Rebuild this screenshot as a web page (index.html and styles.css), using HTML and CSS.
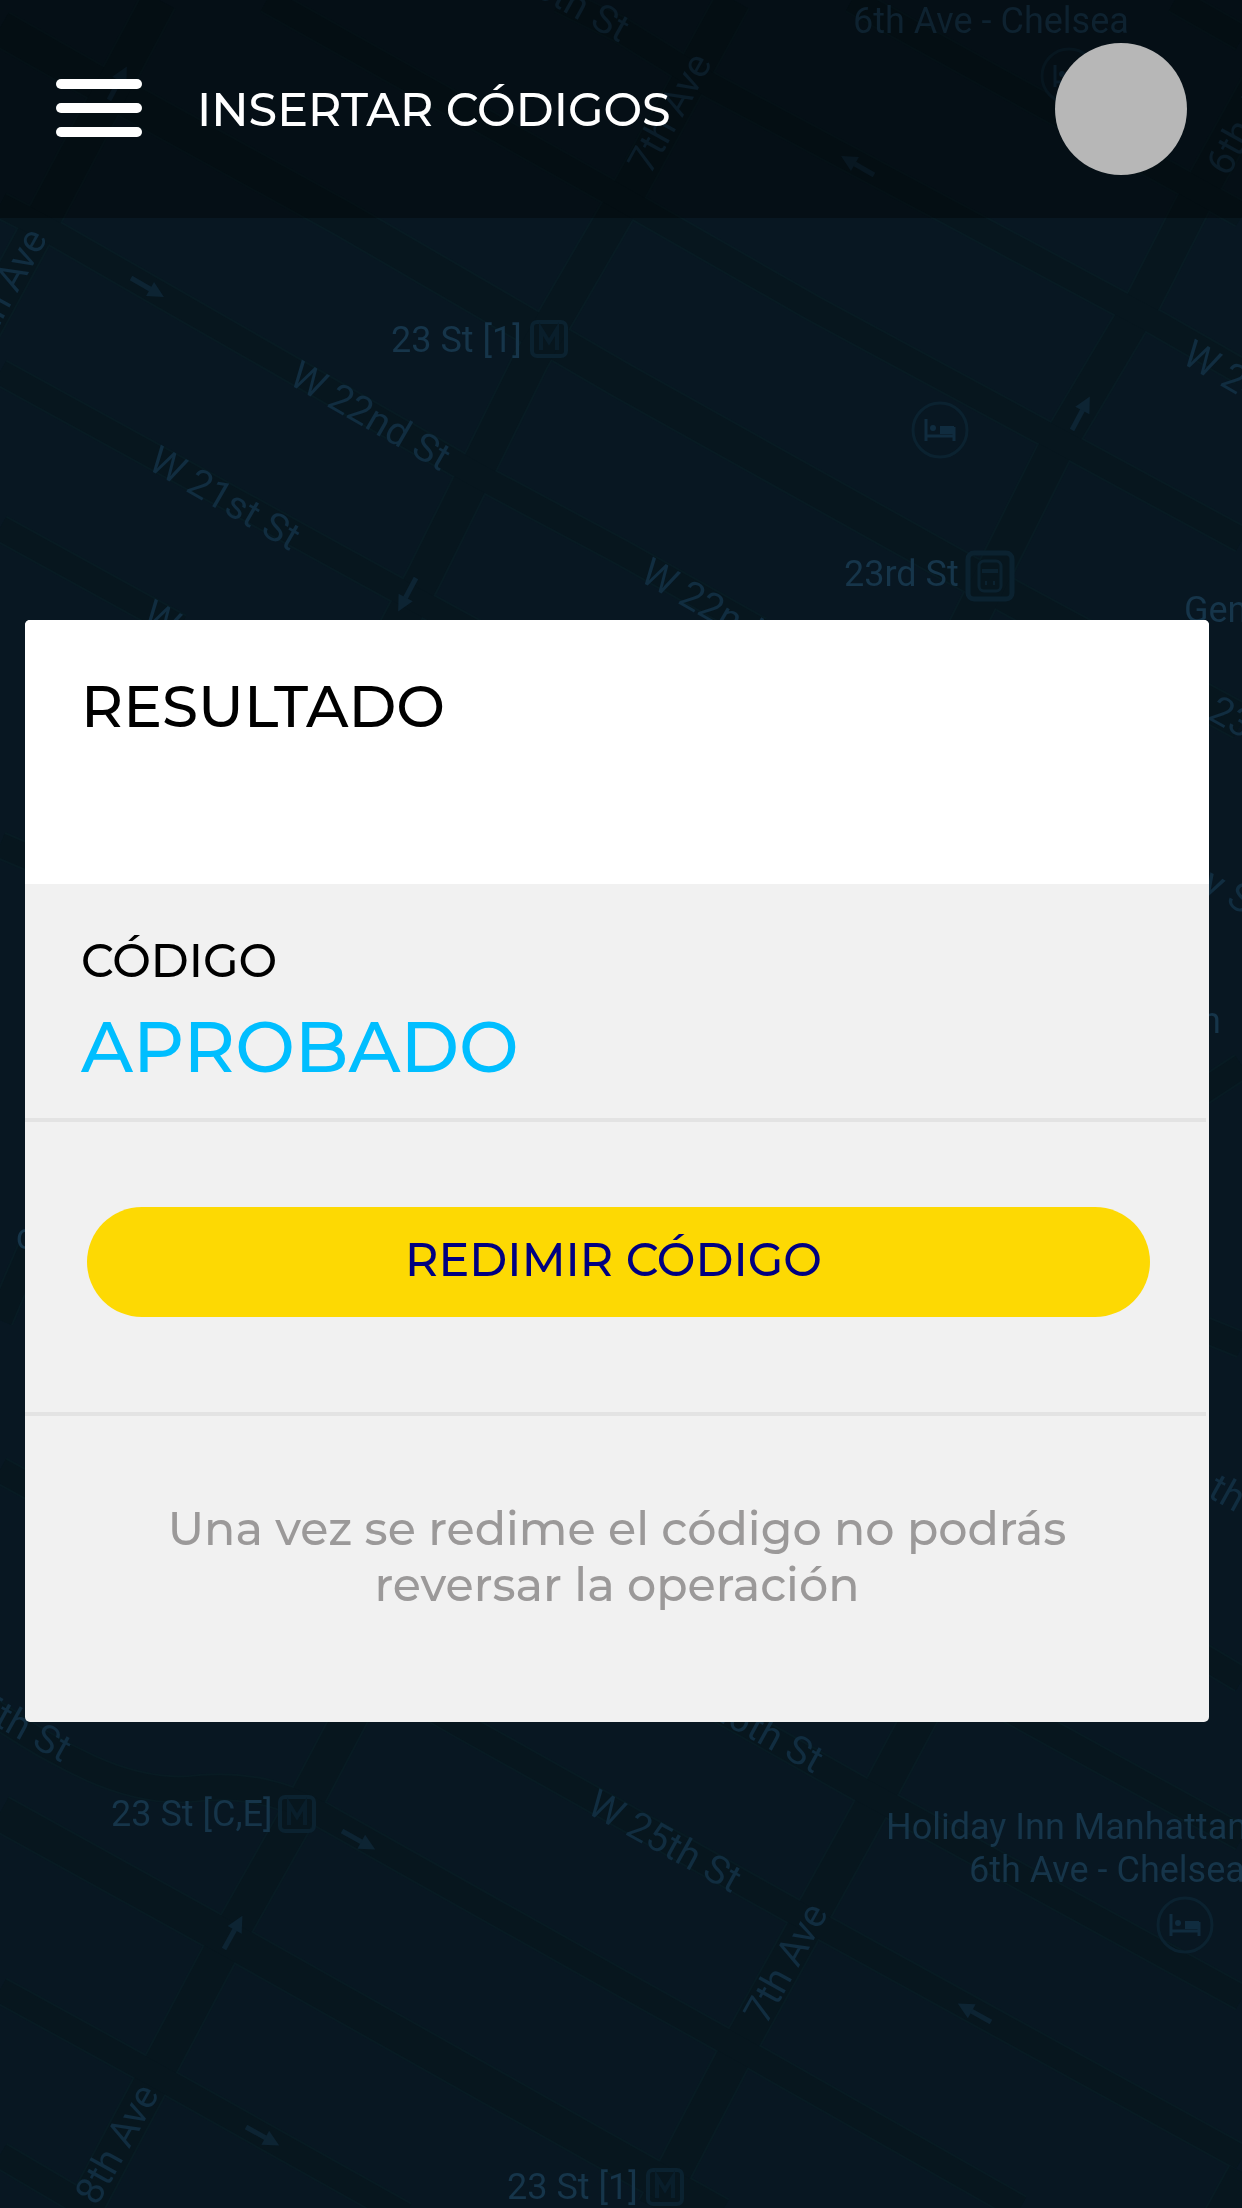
FILE: index.html
```html
<!DOCTYPE html>
<html lang="es">
<head>
<meta charset="utf-8">
<meta name="viewport" content="width=device-width, initial-scale=1">
<title>Insertar códigos</title>
<link rel="stylesheet" href="styles.css">
</head>
<body>
<svg class="map" viewBox="0 0 1242 2208" preserveAspectRatio="xMidYMid slice" aria-hidden="true">
  <defs>
    <g id="wide">
      <path d="M0 28L118 95L342 218L621 380L1010 597L1242 722"/>
      <path d="M159 0L44 217L-20 335"/>
      <path d="M733 0L624 200L531 360L424 577L380 660"/>
      <path d="M1305 0L1195 200L1144 300L1055 450L960 640"/>
      <path d="M380 1660L309 1795L220 1953L85 2208"/>
      <path d="M950 1660L877 1797L739 2047L655 2208"/>
      <path d="M1245 2174L1220 2220"/>
      <path d="M0 1813L230 1940L600 2148L720 2215"/>
    </g>
    <g id="narrow">
      <path d="M267 0L608 191L811 307L1065 444L1242 540"/>
      <path d="M560 0L621 30L710 85L960 218L1160 325L1242 372"/>
      <path d="M852 0L1179 180L1242 215"/>
      <path d="M1175 0L1242 38"/>
      <path d="M0 205L45 228L188 310L473 473L621 552L760 630"/>
      <path d="M0 372L392 587L480 635"/>
      <path d="M0 528L180 627"/>
      <path d="M0 1990L155 2075L405 2215"/>
      <path d="M0 2155L90 2208"/>
      <path d="M-10 1710Q40 1745 90 1768Q150 1795 200 1788Q270 1782 329 1819L621 1983L738 2048L1020 2208"/>
      <path d="M400 1690L457 1723L791 1910L1242 2158"/>
      <path d="M720 1710L862 1790L1242 1998"/>
      <path d="M1000 1705L1242 1838"/>
      <path d="M1190 1100L1242 1066M1205 1330L1242 1345M1200 1655L1242 1680"/>
      <path d="M0 845L40 862M0 1470L40 1492M0 1320L30 1250"/>
    </g>
    <g id="arrow">
      <path d="M0 0H28" fill="none" stroke="#0d2433" stroke-width="5"/>
      <path d="M38 0L22 -8V8Z" fill="#0d2433"/>
    </g>
    <g id="metro">
      <rect x="2" y="2" width="34" height="34" rx="5" fill="none" stroke="#0b2230" stroke-width="4"/>
      <path d="M11 30V9L19 22L27 9V30" fill="none" stroke="#091e2b" stroke-width="4"/>
    </g>
    <g id="hotel">
      <circle r="27" fill="none" stroke="#0b2230" stroke-width="3"/>
      <path d="M-14 -11V11M-14 6H14M14 -3V11" fill="none" stroke="#102c3f" stroke-width="3"/>
      <path d="M0 -4H14V4H0Z" fill="#102c3f"/>
      <circle cx="-7" cy="-2" r="3" fill="#102c3f"/>
    </g>
  </defs>
  <use href="#wide" class="edge-wide"/>
  <use href="#narrow" class="edge-narrow"/>
  <use href="#wide" class="road-wide"/>
  <use href="#narrow" class="road-narrow"/>

  <use href="#arrow" transform="translate(131 278) rotate(30)"/>
  <use href="#arrow" transform="translate(109 100) rotate(-62)"/>
  <use href="#arrow" transform="translate(874 175) rotate(-150)"/>
  <use href="#arrow" transform="translate(416 578) rotate(118)"/>
  <use href="#arrow" transform="translate(1072 430) rotate(-62)"/>
  <use href="#arrow" transform="translate(342 1831) rotate(29)"/>
  <use href="#arrow" transform="translate(224 1949) rotate(-61)"/>
  <use href="#arrow" transform="translate(246 2127) rotate(29)"/>
  <use href="#arrow" transform="translate(991 2022) rotate(-151)"/>

  <use href="#metro" x="530" y="320"/>
  <use href="#metro" x="278" y="1795"/>
  <use href="#metro" x="646" y="2168"/>
  <use href="#hotel" x="940" y="430"/>
  <use href="#hotel" x="1185" y="1925"/>
  <use href="#hotel" x="1069" y="76"/>
  <g fill="none" stroke="#0b2230">
    <rect x="968" y="553" width="44" height="46" rx="6" stroke-width="5"/>
    <rect x="979" y="561" width="22" height="30" rx="5" stroke-width="3"/>
    <path d="M982 571H998M985 583H987M993 583H995" stroke-width="4"/>
  </g>

  <g class="place">
    <text x="391" y="352">23 St [1]</text>
    <text x="844" y="586">23rd St</text>
    <text x="1184" y="622">Gen</text>
    <text x="111" y="1826">23 St [C,E]</text>
    <text x="507" y="2199">23 St [1]</text>
    <text x="1201" y="1033">n</text>
    <text x="16" y="1249">c</text>
    <text x="853" y="33">6th Ave - Chelsea</text>
    <text x="886" y="1839">Holiday Inn Manhattan</text>
    <text x="969" y="1882">6th Ave - Chelsea</text>
  </g>
  <g class="street">
    <text transform="translate(287 383) rotate(30)">W 22nd St</text>
    <text transform="translate(146 468) rotate(30)">W 21st St</text>
    <text transform="translate(140 622) rotate(30)">W 20th St</text>
    <text transform="translate(638 580) rotate(30)">W 22nd St</text>
    <text transform="translate(1180 362) rotate(30)">W 24th St</text>
    <text transform="translate(1206 718) rotate(29)">23rd St</text>
    <text transform="translate(1200 890) rotate(29)">y St</text>
    <text transform="translate(1206 1496) rotate(29)">th St</text>
    <text transform="translate(585 1812) rotate(29)">W 25th St</text>
    <text text-anchor="end" transform="translate(620 43) rotate(29)">W 25th St</text>
    <text text-anchor="end" transform="translate(62 1763) rotate(29)">W 25th St</text>
    <text text-anchor="end" transform="translate(814 1774) rotate(29)">W 26th St</text>
    <text text-anchor="end" transform="translate(48 238) rotate(-61)">8th Ave</text>
    <text transform="translate(650 176) rotate(-61)">7th Ave</text>
    <text transform="translate(1228 178) rotate(-61)">6th Ave</text>
    <text transform="translate(766 2026) rotate(-61)">7th Ave</text>
    <text transform="translate(97 2207) rotate(-61)">8th Ave</text>
  </g>
</svg>

<div class="screen">
  <header class="topbar">
    <button class="menu" type="button" aria-label="Menú">
      <svg width="88" height="60" viewBox="0 0 88 60" aria-hidden="true">
        <g fill="#fff">
          <rect x="1" y="0" width="86" height="10" rx="5"/>
          <rect x="1" y="24" width="86" height="10" rx="5"/>
          <rect x="1" y="48" width="86" height="10" rx="5"/>
        </g>
      </svg>
    </button>
    <h1 class="title">INSERTAR CÓDIGOS</h1>
    <div class="avatar"></div>
  </header>

  <main class="content">
    <section class="card">
      <header class="card-head">
        <h2 class="card-title">RESULTADO</h2>
      </header>
      <div class="row result">
        <p class="label">CÓDIGO</p>
        <p class="status">APROBADO</p>
      </div>
      <div class="row action">
        <button class="redeem" type="button">REDIMIR CÓDIGO</button>
      </div>
      <p class="note">Una vez se redime el código no podrás reversar la operación</p>
    </section>
  </main>
</div>
</body>
</html>
```
FILE: styles.css
```css
* {
  box-sizing: border-box;
}

body {
  margin: 0;
  background: #081722;
  color: #000;
  font-family: Montserrat, Inter, "Liberation Sans", sans-serif;
  font-weight: 500;
}

h1,
h2,
p {
  margin: 0;
  font-weight: 500;
}

button {
  border: 0;
  font: inherit;
  cursor: pointer;
}

/* Map behind the screen */
.map {
  position: fixed;
  inset: 0;
  width: 100%;
  height: 100%;
}

.edge-wide,
.edge-narrow,
.road-wide,
.road-narrow {
  fill: none;
}

.edge-wide {
  stroke: #081b23;
  stroke-width: 38px;
}

.edge-narrow {
  stroke: #081b23;
  stroke-width: 28px;
}

.road-wide {
  stroke: #07161e;
  stroke-width: 34px;
}

.road-narrow {
  stroke: #07161e;
  stroke-width: 24px;
}

.place,
.street {
  font-family: Roboto, sans-serif;
  font-weight: 400;
}

.place {
  fill: #16354a;
  font-size: 36px;
}

.street {
  fill: #112d40;
  font-size: 39px;
}

/* Foreground */
.screen {
  position: relative;
  min-height: 100vh;
}

.topbar {
  display: flex;
  align-items: center;
  height: 218px;
  padding: 0 55px;
  background: rgba(0, 0, 0, 0.35);
}

.menu {
  display: flex;
  padding: 0;
  background: none;
}

.title {
  flex: 1;
  margin-left: 54px;
  padding-top: 2px;
  color: #fff;
  font-size: 46px;
  line-height: 56px;
}

.avatar {
  width: 132px;
  height: 132px;
  border-radius: 50%;
  background: #b7b7b7;
}

.content {
  padding: 402px 33px 80px 25px;
}

.card {
  overflow: hidden;
  border-radius: 5px;
  background: #f1f1f1;
}

.card-head {
  min-height: 264px;
  padding: 51px 56px;
  background: #fff;
}

.card-title {
  font-size: 58px;
  line-height: 72px;
}

.row {
  margin-right: 3px;
  border-bottom: 4px solid #e3e3e3;
}

.result {
  padding: 49px 56px 27px;
}

.label {
  font-size: 46px;
  line-height: 56px;
}

.status {
  margin-top: 14px;
  color: #00beff;
  font-size: 71px;
  line-height: 88px;
}

.action {
  padding: 85px 56px 95px 62px;
}

.redeem {
  display: block;
  width: 100%;
  height: 110px;
  padding: 0 10px 4px 0;
  border-radius: 55px;
  background: #fdd903;
  color: #000080;
  font-size: 46px;
  line-height: 56px;
}

.note {
  padding: 85px 120px 109px;
  color: #9b9999;
  font-size: 46px;
  line-height: 56px;
  text-align: center;
}
```
